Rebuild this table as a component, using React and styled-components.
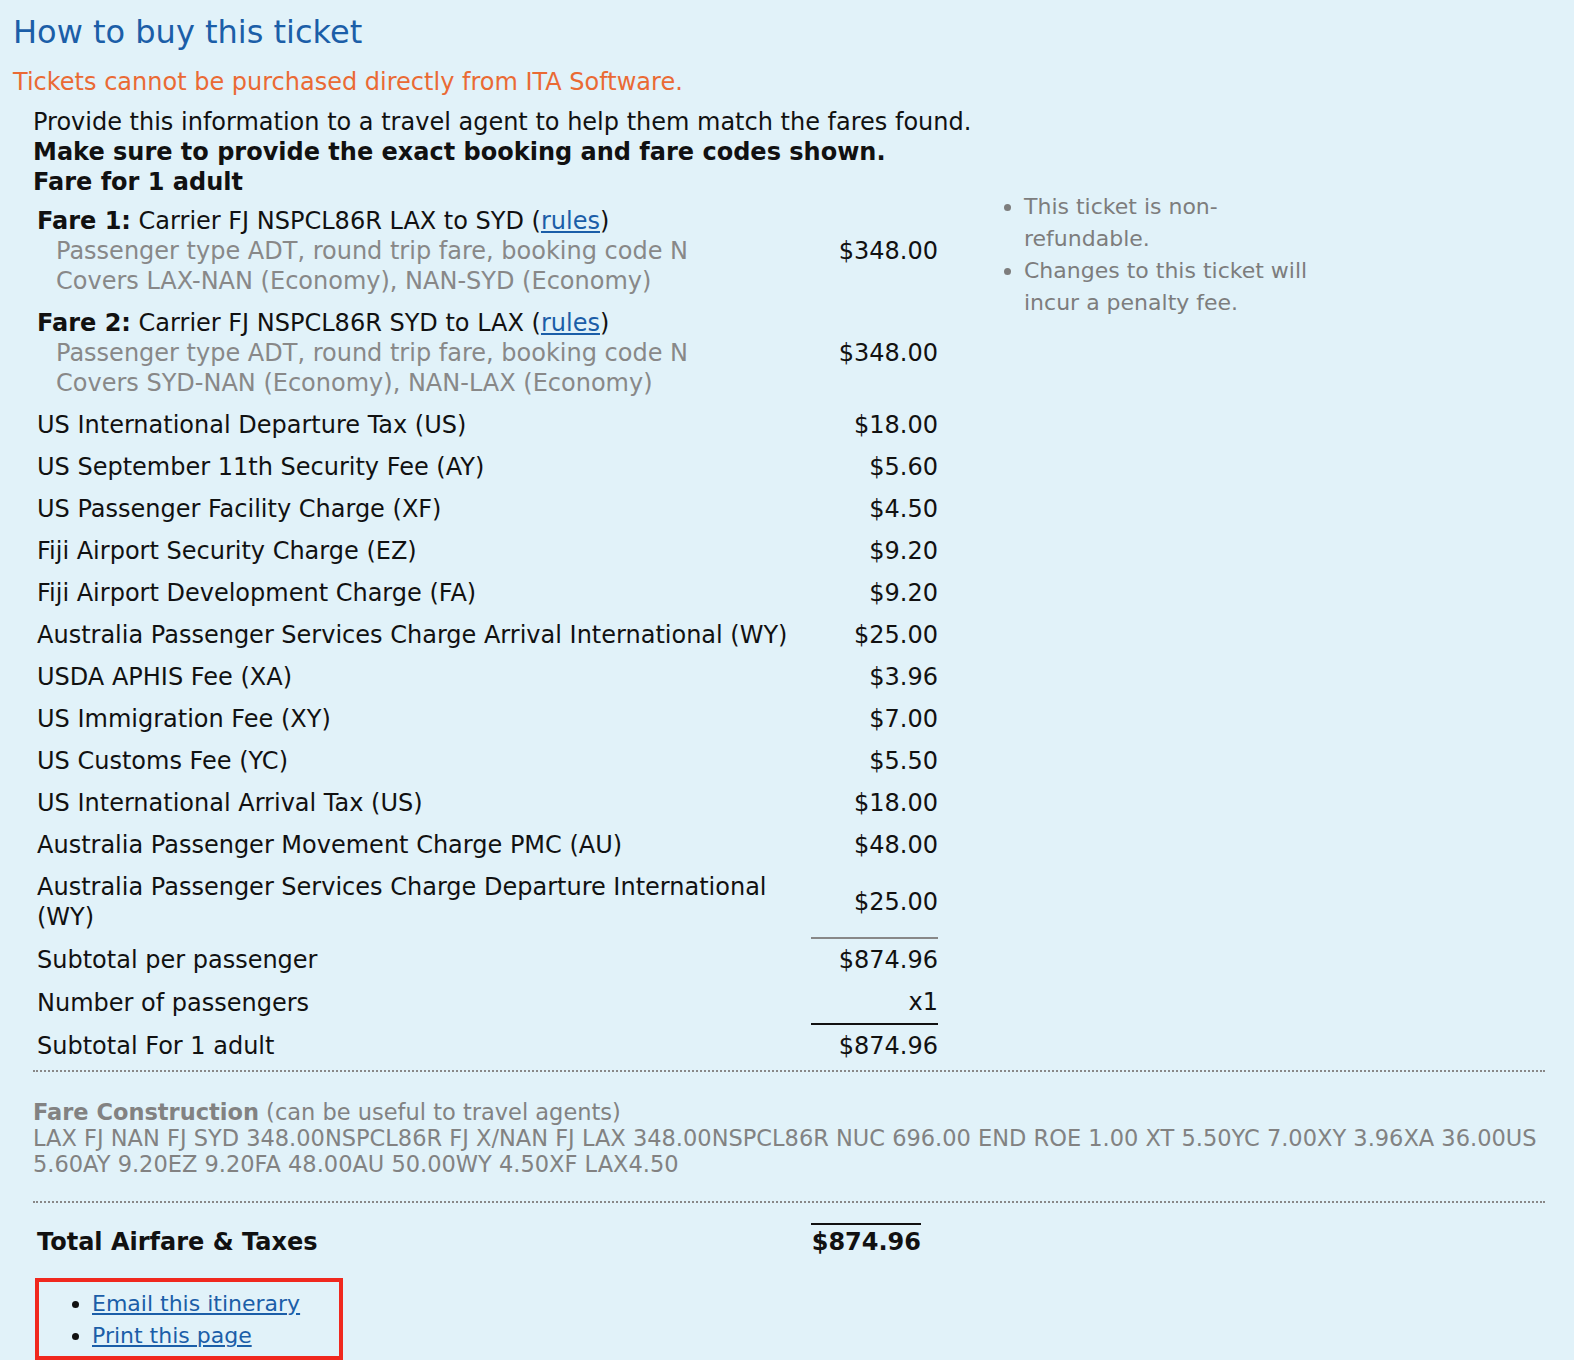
import React from 'react';
import styled, { createGlobalStyle } from 'styled-components';

const GlobalStyle = createGlobalStyle`
  html, body {
    margin: 0;
    padding: 0;
    background: #e1f2f9;
  }
  body {
    font-family: "DejaVu Sans", Verdana, sans-serif;
    color: #111;
  }
`;

const fares = [
  {
    num: 1,
    route: 'LAX to SYD',
    type: 'Passenger type ADT, round trip fare, booking code N',
    covers: 'Covers LAX-NAN (Economy), NAN-SYD (Economy)',
    amount: '$348.00',
  },
  {
    num: 2,
    route: 'SYD to LAX',
    type: 'Passenger type ADT, round trip fare, booking code N',
    covers: 'Covers SYD-NAN (Economy), NAN-LAX (Economy)',
    amount: '$348.00',
  },
];

const taxes = [
  ['US International Departure Tax (US)', '$18.00'],
  ['US September 11th Security Fee (AY)', '$5.60'],
  ['US Passenger Facility Charge (XF)', '$4.50'],
  ['Fiji Airport Security Charge (EZ)', '$9.20'],
  ['Fiji Airport Development Charge (FA)', '$9.20'],
  ['Australia Passenger Services Charge Arrival International (WY)', '$25.00'],
  ['USDA APHIS Fee (XA)', '$3.96'],
  ['US Immigration Fee (XY)', '$7.00'],
  ['US Customs Fee (YC)', '$5.50'],
  ['US International Arrival Tax (US)', '$18.00'],
  ['Australia Passenger Movement Charge PMC (AU)', '$48.00'],
  ['Australia Passenger Services Charge Departure International (WY)', '$25.00'],
];

const App = () => {
  return (
    <>
      <GlobalStyle />
      <Page>
        <Heading>How to buy this ticket</Heading>
        <Warning>Tickets cannot be purchased directly from ITA Software.</Warning>
        <Body>
          <Columns>
            <LeftColumn>
              <Intro>Provide this information to a travel agent to help them match the fares found.</Intro>
              <Intro bold>Make sure to provide the exact booking and fare codes shown.</Intro>
              <Intro bold>Fare for 1 adult</Intro>
              <FareTable>
                <tbody>
                  {fares.map(fare => (
                    <tr key={fare.num}>
                      <LabelCell>
                        <div>
                          <b>Fare {fare.num}:</b> Carrier FJ NSPCL86R {fare.route} (<PlainLink href="#">rules</PlainLink>)
                        </div>
                        <FareDetail>{fare.type}</FareDetail>
                        <FareDetail>{fare.covers}</FareDetail>
                      </LabelCell>
                      <AmountCell>{fare.amount}</AmountCell>
                    </tr>
                  ))}
                  {taxes.map(([label, amount]) => (
                    <tr key={label}>
                      <LabelCell>{label}</LabelCell>
                      <AmountCell>{amount}</AmountCell>
                    </tr>
                  ))}
                  <tr>
                    <LabelCell>Subtotal per passenger</LabelCell>
                    <AmountCell rule="#888">$874.96</AmountCell>
                  </tr>
                  <tr>
                    <LabelCell>Number of passengers</LabelCell>
                    <AmountCell>x1</AmountCell>
                  </tr>
                  <tr>
                    <LabelCell>Subtotal For 1 adult</LabelCell>
                    <AmountCell rule="#111">$874.96</AmountCell>
                  </tr>
                </tbody>
              </FareTable>
            </LeftColumn>
            <Notes>
              <li>This ticket is non-refundable.</li>
              <li>Changes to this ticket will incur a penalty fee.</li>
            </Notes>
          </Columns>
          <Divider />
          <Construction>
            <div>
              <b>Fare Construction</b> (can be useful to travel agents)
            </div>
            <div>
              LAX FJ NAN FJ SYD 348.00NSPCL86R FJ X/NAN FJ LAX 348.00NSPCL86R NUC 696.00 END ROE 1.00 XT 5.50YC 7.00XY 3.96XA 36.00US 5.60AY 9.20EZ 9.20FA 48.00AU 50.00WY 4.50XF LAX4.50
            </div>
          </Construction>
          <Divider />
          <TotalTable>
            <tbody>
              <tr>
                <TotalLabel>Total Airfare &amp; Taxes</TotalLabel>
                <TotalAmount>$874.96</TotalAmount>
              </tr>
            </tbody>
          </TotalTable>
          <ActionBox>
            <li><PlainLink href="#">Email this itinerary</PlainLink></li>
            <li><PlainLink href="#">Print this page</PlainLink></li>
          </ActionBox>
        </Body>
      </Page>
    </>
  );
};

const Page = styled.div`
  padding: 12px 29px 8px 13px;
`;

const Heading = styled.h2`
  margin: 0;
  font-size: 32px;
  font-weight: normal;
  line-height: 40px;
  color: #1b5ea8;
`;

const Warning = styled.div`
  margin-top: 15px;
  font-size: 24px;
  line-height: 30px;
  color: #ea6a34;
`;

const Body = styled.div`
  padding-left: 20px;
  padding-top: 10px;
  font-size: 24px;
  line-height: 30px;
`;

const Columns = styled.div`
  display: flex;
  gap: 56px;
`;

const LeftColumn = styled.div`
  width: 905px;
  flex-shrink: 0;
`;

const Intro = styled.div`
  font-weight: ${props => (props.bold ? 'bold' : 'normal')};
  white-space: nowrap;
`;

const FareTable = styled.table`
  margin-top: 3px;
  border-collapse: collapse;
  width: 905px;
`;

const LabelCell = styled.td`
  padding: 6px 8px 6px 4px;
  vertical-align: middle;
`;

const AmountCell = styled.td`
  padding: 6px 0;
  width: 127px;
  text-align: right;
  vertical-align: middle;
  white-space: nowrap;
  border-top: ${props => (props.rule ? `2px solid ${props.rule}` : 'none')};
`;

const PlainLink = styled.a`
  color: #1b5ea8;
  text-decoration: underline;
`;

const FareDetail = styled.div`
  padding-left: 19px;
  color: #888;
`;

const Notes = styled.ul`
  margin: 84px 0 0;
  padding-left: 30px;
  width: 300px;
  font-size: 22px;
  line-height: 32px;
  color: #7d7d7d;
`;

const Divider = styled.hr`
  margin: 3px 0 0;
  border: none;
  border-top: 2px dotted #888;
`;

const Construction = styled.div`
  padding: 27px 0 21px;
  font-size: 22.5px;
  line-height: 26px;
  color: #828282;
`;

const TotalTable = styled.table`
  margin-top: 20px;
  border-collapse: collapse;
  width: 888px;
`;

const TotalLabel = styled.td`
  padding: 2px 4px;
  font-weight: bold;
  font-size: 24px;
`;

const TotalAmount = styled.td`
  padding: 2px 0;
  width: 110px;
  text-align: right;
  font-weight: bold;
  font-size: 24px;
  border-top: 2px solid #111;
`;

const ActionBox = styled.ul`
  display: inline-block;
  margin: 19px 0 0 2px;
  padding: 6px 39px 4px 53px;
  border: 4px solid #f0281e;
  font-size: 22px;
  line-height: 32px;
`;

export default App;
